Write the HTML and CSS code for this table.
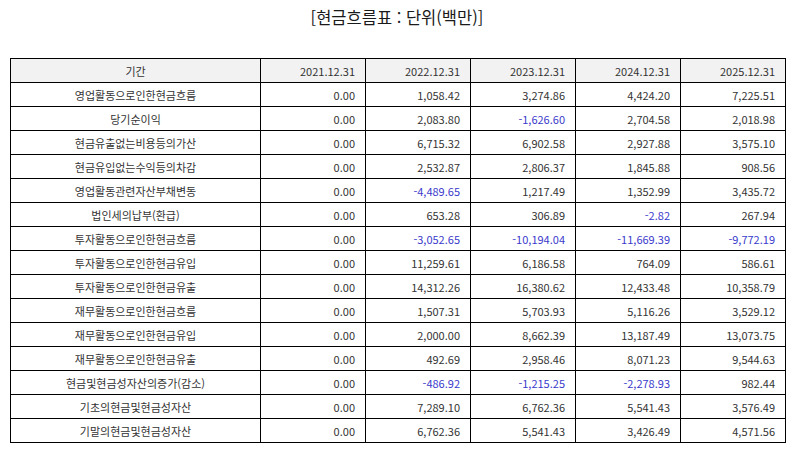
FILE: index.html
```
<!DOCTYPE html>
<html lang="ko">
<head>
<meta charset="utf-8">
<title>현금흐름표</title>
<link rel="stylesheet" href="styles.css">
</head>
<body>
<h1 class="title">[현금흐름표 : 단위(백만)]</h1>
<table class="cf">
<colgroup>
<col class="c-label"><col class="c-num"><col class="c-num"><col class="c-num"><col class="c-num"><col class="c-num">
</colgroup>
<thead>
<tr><th class="lbl">기간</th><th>2021.12.31</th><th>2022.12.31</th><th>2023.12.31</th><th>2024.12.31</th><th>2025.12.31</th></tr>
</thead>
<tbody>
<tr><td class="lbl">영업활동으로인한현금흐름</td><td>0.00</td><td>1,058.42</td><td>3,274.86</td><td>4,424.20</td><td>7,225.51</td></tr>
<tr><td class="lbl">당기순이익</td><td>0.00</td><td>2,083.80</td><td class="neg">-1,626.60</td><td>2,704.58</td><td>2,018.98</td></tr>
<tr><td class="lbl">현금유출없는비용등의가산</td><td>0.00</td><td>6,715.32</td><td>6,902.58</td><td>2,927.88</td><td>3,575.10</td></tr>
<tr><td class="lbl">현금유입없는수익등의차감</td><td>0.00</td><td>2,532.87</td><td>2,806.37</td><td>1,845.88</td><td>908.56</td></tr>
<tr><td class="lbl">영업활동관련자산부채변동</td><td>0.00</td><td class="neg">-4,489.65</td><td>1,217.49</td><td>1,352.99</td><td>3,435.72</td></tr>
<tr><td class="lbl">법인세의납부(환급)</td><td>0.00</td><td>653.28</td><td>306.89</td><td class="neg">-2.82</td><td>267.94</td></tr>
<tr><td class="lbl">투자활동으로인한현금흐름</td><td>0.00</td><td class="neg">-3,052.65</td><td class="neg">-10,194.04</td><td class="neg">-11,669.39</td><td class="neg">-9,772.19</td></tr>
<tr><td class="lbl">투자활동으로인한현금유입</td><td>0.00</td><td>11,259.61</td><td>6,186.58</td><td>764.09</td><td>586.61</td></tr>
<tr><td class="lbl">투자활동으로인한현금유출</td><td>0.00</td><td>14,312.26</td><td>16,380.62</td><td>12,433.48</td><td>10,358.79</td></tr>
<tr><td class="lbl">재무활동으로인한현금흐름</td><td>0.00</td><td>1,507.31</td><td>5,703.93</td><td>5,116.26</td><td>3,529.12</td></tr>
<tr><td class="lbl">재무활동으로인한현금유입</td><td>0.00</td><td>2,000.00</td><td>8,662.39</td><td>13,187.49</td><td>13,073.75</td></tr>
<tr><td class="lbl">재무활동으로인한현금유출</td><td>0.00</td><td>492.69</td><td>2,958.46</td><td>8,071.23</td><td>9,544.63</td></tr>
<tr><td class="lbl">현금및현금성자산의증가(감소)</td><td>0.00</td><td class="neg">-486.92</td><td class="neg">-1,215.25</td><td class="neg">-2,278.93</td><td>982.44</td></tr>
<tr><td class="lbl">기초의현금및현금성자산</td><td>0.00</td><td>7,289.10</td><td>6,762.36</td><td>5,541.43</td><td>3,576.49</td></tr>
<tr><td class="lbl">기말의현금및현금성자산</td><td>0.00</td><td>6,762.36</td><td>5,541.43</td><td>3,426.49</td><td>4,571.56</td></tr>
</tbody>
</table>
</body>
</html>
```
FILE: styles.css
```
html, body {
  margin: 0;
  padding: 0;
  background: #ffffff;
}
body {
  font-family: "Noto Sans CJK KR", "Noto Sans", sans-serif;
  color: #333333;
}
.title {
  margin: 0;
  height: 58px;
  padding-top: 6px;
  box-sizing: border-box;
  font-size: 16.5px;
  font-weight: normal;
  line-height: 22px;
  text-align: center;
  color: #1a1a1a;
}
.cf {
  margin-left: 10px;
  width: 776px;
  table-layout: fixed;
  border-collapse: collapse;
  font-size: 11px;
}
.c-label { width: 250px; }
.c-num { width: 105px; }
.cf th, .cf td {
  border: 1px solid #000000;
  height: 23px;
  padding: 0 10px 0 4px;
  text-align: right;
  font-weight: normal;
  line-height: 14px;
  white-space: nowrap;
}
.cf thead th {
  background: #f2f2f2;
}
.cf .lbl {
  text-align: center;
  padding: 0 4px;
}
.cf .neg {
  color: #3a3acc;
}
```
